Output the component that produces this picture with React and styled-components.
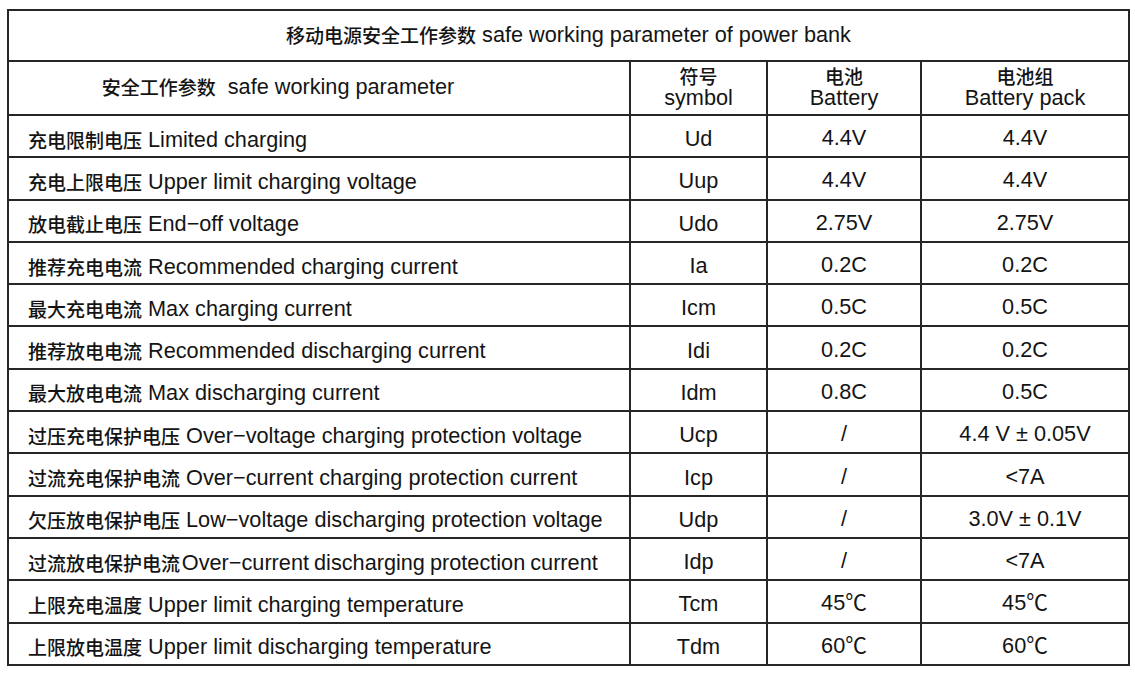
import React from "react";
import styled, { createGlobalStyle } from "styled-components";

const GlobalStyle = createGlobalStyle`
  body {
    margin: 0;
    background: #ffffff;
    font-family: "Liberation Sans", "Noto Sans CJK SC", sans-serif;
    color: #141414;
  }
`;

const Page = styled.div`
  padding: 9px 0 0 7px;
`;

const Grid = styled.div`
  display: grid;
  grid-template-columns: 622px 137px 154px 208px;
  grid-template-rows: 51px 54px;
  grid-auto-rows: 42.3px;
  width: max-content;
  border-top: 2px solid #262626;
  border-left: 2px solid #262626;
`;

const Cell = styled.div`
  box-sizing: border-box;
  border-right: 2px solid #262626;
  border-bottom: 2px solid #262626;
  display: flex;
  align-items: center;
  justify-content: ${(p) => (p.$left ? "flex-start" : "center")};
  padding: ${(p) => p.$pad || "0"};
  text-align: center;
  white-space: nowrap;
  line-height: 22px;
`;

const TitleCell = styled(Cell)`
  grid-column: 1 / -1;
  padding-bottom: 2px;
`;

const HeadStack = styled.div`
  display: flex;
  flex-direction: column;
  align-items: center;
  margin-top: -3px;

  & > span {
    display: block;
    height: 22px;
    line-height: 22px;
  }
`;

const Cn = styled.span`
  font-family: "Noto Sans CJK SC", sans-serif;
  font-size: 19px;
  font-weight: 500;
`;

const En = styled.span`
  font-family: "Liberation Sans", "Noto Sans CJK SC", sans-serif;
  font-size: 21.7px;
  word-spacing: ${(p) => p.$tight || "0"};
`;

const rows = [
  ["充电限制电压", "Limited charging", "Ud", "4.4V", "4.4V"],
  ["充电上限电压", "Upper limit charging voltage", "Uup", "4.4V", "4.4V"],
  ["放电截止电压", "End−off voltage", "Udo", "2.75V", "2.75V"],
  ["推荐充电电流", "Recommended charging current", "Ia", "0.2C", "0.2C"],
  ["最大充电电流", "Max charging current", "Icm", "0.5C", "0.5C"],
  ["推荐放电电流", "Recommended discharging current", "Idi", "0.2C", "0.2C"],
  ["最大放电电流", "Max discharging current", "Idm", "0.8C", "0.5C"],
  ["过压充电保护电压", "Over−voltage charging protection voltage", "Ucp", "/", "4.4 V ± 0.05V"],
  ["过流充电保护电流", "Over−current charging protection current", "Icp", "/", "<7A"],
  ["欠压放电保护电压", "Low−voltage discharging protection voltage", "Udp", "/", "3.0V ± 0.1V"],
  ["过流放电保护电流", "Over−current discharging protection current", "Idp", "/", "<7A", true],
  ["上限充电温度", "Upper limit charging temperature", "Tcm", "45℃", "45℃"],
  ["上限放电温度", "Upper limit discharging temperature", "Tdm", "60℃", "60℃"],
];

export default function App() {
  return (
    <Page>
      <GlobalStyle />
      <Grid>
        <TitleCell>
          <Cn>移动电源安全工作参数</Cn>
          <En>&nbsp;safe working parameter of power bank</En>
        </TitleCell>

        <Cell $pad="0 82px 2px 0">
          <Cn>安全工作参数</Cn>
          <En>&nbsp;&nbsp;safe working parameter</En>
        </Cell>
        <Cell>
          <HeadStack>
            <Cn>符号</Cn>
            <En>symbol</En>
          </HeadStack>
        </Cell>
        <Cell>
          <HeadStack>
            <Cn>电池</Cn>
            <En>Battery</En>
          </HeadStack>
        </Cell>
        <Cell>
          <HeadStack>
            <Cn>电池组</Cn>
            <En>Battery pack</En>
          </HeadStack>
        </Cell>

        {rows.map(([cn, en, sym, bat, pack, tight]) => (
          <React.Fragment key={sym}>
            <Cell $left $pad="7px 0 0 19px">
              <Cn>{cn}</Cn>
              {tight ? (
                <En $tight="-1px">&#8202;{en}</En>
              ) : (
                <En>&nbsp;{en}</En>
              )}
            </Cell>
            <Cell $pad="6px 0 0 0">
              <En>{sym}</En>
            </Cell>
            <Cell $pad="4px 0 0 0">
              <En>{bat}</En>
            </Cell>
            <Cell $pad="4px 0 0 0">
              <En>{pack}</En>
            </Cell>
          </React.Fragment>
        ))}
      </Grid>
    </Page>
  );
}
